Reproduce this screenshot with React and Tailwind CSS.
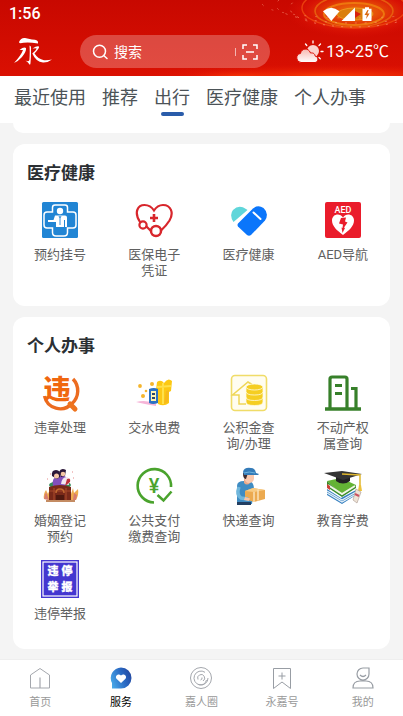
import clsx from 'clsx';

const tabs = ['最近使用', '推荐', '出行', '医疗健康', '个人办事'];

function HeaderArt() {
    return (
        <svg className="absolute inset-0 w-full h-full" viewBox="0 0 403 76" preserveAspectRatio="xMaxYMin slice" aria-hidden="true">
            <defs>
                <radialGradient id="burst" cx="0.5" cy="0.5" r="0.5">
                    <stop offset="0" stopColor="#f08a10" />
                    <stop offset="0.35" stopColor="#e85008" />
                    <stop offset="0.7" stopColor="#de1806" stopOpacity="0.8" />
                    <stop offset="1" stopColor="#d80c04" stopOpacity="0" />
                </radialGradient>
                <radialGradient id="glow" cx="0.5" cy="0.5" r="0.5">
                    <stop offset="0" stopColor="#ff4a08" stopOpacity="0.8" />
                    <stop offset="1" stopColor="#e81404" stopOpacity="0" />
                </radialGradient>
            </defs>
            <ellipse cx="330" cy="76" rx="190" ry="12" fill="url(#glow)" />
            <ellipse cx="240" cy="78" rx="60" ry="9" fill="url(#glow)" />
            <ellipse cx="356" cy="12" rx="70" ry="26" fill="url(#burst)" opacity="0.9" />
            <g fill="none">
                <ellipse cx="355" cy="14" rx="18" ry="6" fill="#d9820c" stroke="#f0a020" opacity="0.9" />
                <ellipse cx="354" cy="14" rx="30" ry="11" stroke="#ee7c10" strokeWidth="2" opacity="0.9" />
                <ellipse cx="354" cy="11" rx="39" ry="16" stroke="#e86a10" strokeWidth="1.600" opacity="0.8" />
                <ellipse cx="354" cy="8" rx="52" ry="20" stroke="#f04a10" strokeWidth="1.400" opacity="0.8" />
                <ellipse cx="354" cy="8" rx="64" ry="19" stroke="#ffa080" strokeWidth="1" strokeDasharray="2 7" opacity="0.6" />
                <ellipse cx="354" cy="5" rx="78" ry="18" stroke="#ffb090" strokeWidth="1" strokeDasharray="2 8" opacity="0.5" />
                <ellipse cx="354" cy="3" rx="92" ry="15" stroke="#ffb090" strokeWidth="1" strokeDasharray="2 9" opacity="0.4" />
            </g>
            <path d="m355 11 6 3-6 4z" fill="#d8200c" />
        </svg>
    );
}

function StatusIcons() {
    return (
        <svg className="w-[50px] h-4" viewBox="0 0 50 16" fill="#fff" aria-hidden="true">
            <path d="M0 5.300Q8 -1.800 16.500 5.300L8.300 15Z" />
            <path d="M32 1.500V15H18.500Z" />
            <path d="M42 1.200h4V2.700h2.500V15h-9V2.700H42Z" />
            <path d="m44.500 4-3 5h2.300l-.7 4 3.500-5.400h-2.300l1.300-3.600Z" fill="#d96a10" />
        </svg>
    );
}

function BrandMark() {
    return (
        <svg className="w-[38px] h-[29px]" viewBox="0 0 38 29" fill="#fff" aria-hidden="true">
            <path d="M5 5Q7 .5 11 1L18 2.500Q25 2.500 24 6.500Q14 4.700 9.500 5.800Q5 7 5 5Z" />
            <path d="M5.500 13Q10 9.500 12 11Q12.500 14.500 8 20Q4 24.500 0 26Q7 18.500 9 13Z" />
            <path d="M15.500 8.500Q17.500 9 17 12Q17.200 19 16.500 26Q16.300 29.500 14 25.500L11.500 23.500Q15 25 15.400 23Q16 15 15.500 8.500Z" />
            <path d="M18.500 11.500Q23 8.500 25 9.500Q26 10.500 20.500 16.500Q24 22 30 23.200Q34 23.500 38 22.500Q34 25.700 29 25.500Q22 25 18.300 16.500Q22.500 13 22.500 11.300Z" />
        </svg>
    );
}

function SearchIcon() {
    return (
        <svg className="w-4 h-4 shrink-0" viewBox="0 0 16 16" fill="none" stroke="#fff" strokeWidth="1.500" strokeLinecap="round" aria-hidden="true">
            <circle cx="7.500" cy="7.200" r="6" />
            <path d="m12 11.700 3 2.800" />
        </svg>
    );
}

function ScanIcon() {
    return (
        <svg className="w-4 h-4" viewBox="0 0 16 16" fill="none" stroke="#fff" strokeWidth="1.500" aria-hidden="true">
            <path d="M5 1H1v4M11 1h4v4M5 15H1v-4M11 15h4v-4M4 8h8" />
        </svg>
    );
}

function WeatherIcon() {
    return (
        <svg className="w-7 h-6" viewBox="0 0 28 24" aria-hidden="true">
            <defs>
                <linearGradient id="cloud" x1="0" y1="0" x2="0" y2="1">
                    <stop offset="0" stopColor="#f8b8b0" />
                    <stop offset="1" stopColor="#fff" />
                </linearGradient>
            </defs>
            <circle cx="17" cy="11" r="6" fill="#fbd2cd" />
            <path d="M17 1v2M9.500 4l1.300 1.500M24.500 4l-1.500 1.500M25 11.500h2M23 17.500l1.300 1.200" stroke="#fff" strokeWidth="1.300" strokeLinecap="round" />
            <path d="M5 22.500a4.600 4.600 0 0 1-.5-9.100C5 8.500 12.500 7 14.500 13c3.500-.5 4.500 1.500 4.500 3 4 .5 3.500 6.500 0 6.500Z" fill="url(#cloud)" stroke="#da0c04" strokeWidth="1" />
        </svg>
    );
}

function ClinicIcon() {
    return (
        <svg viewBox="0 0 38 38">
            <rect x="1" y="1" width="36" height="36" rx="1.500" fill="#2185d4" />
            <path d="M14 4h10q2.500 0 2.500 2.500V11H32q3 0 3 3v10q0 3-3 3h-5.500v4.500Q26.500 35 23 35h-8q-3.500 0-3.500-3.500V27H6q-3 0-3-3V14q0-3 3-3h5.500V6.500Q11.500 4 14 4Z" fill="none" stroke="#fff" strokeWidth="1.500" />
            <circle cx="19" cy="10" r="3.200" fill="#fff" />
            <path d="M14 14.500h10q2 0 2 2V26h-2v-7h-1v7h-8v-5H7v-2h5.500Z" fill="#fff" />
            <path d="m18 15 1 2 1-2M19 17v7" stroke="#2185d4" fill="none" strokeWidth=".9" />
        </svg>
    );
}

function HeartScopeIcon() {
    return (
        <svg viewBox="0 0 38 38" fill="none" stroke="#d8262c" strokeWidth="2.200" strokeLinecap="round">
            <path d="M5 21C-1.500 11 3 4 9.500 4q6 0 9.500 5.500Q22.500 4 28 4c8 0 11 8 6.500 15.500Q31 25 26.500 29" />
            <circle cx="8" cy="24" r="3.600" />
            <path d="M11.500 25.500Q14 28 16 30" />
            <circle cx="21" cy="30" r="5" strokeWidth="2.500" />
            <path d="M19 13v8M15 17h8" strokeWidth="2.600" strokeLinecap="butt" />
        </svg>
    );
}

function PillHeartIcon() {
    return (
        <svg viewBox="0 0 38 38">
            <path d="M3.500 21Q-1 14 3 9q6-6 13-1l1.500 1Z" fill="#5fd6da" />
            <path d="m8 22.500 15-15q5-4 10.500-.5 6 5.500 1.500 12.500L21 34q-2 1.500-4 0L8 25.500q-1-1.500 0-3Z" fill="#0b76fb" />
            <path d="m23.500 11.500 7 6.500" stroke="#fff" strokeWidth="2" strokeLinecap="round" />
        </svg>
    );
}

function AedIcon() {
    return (
        <svg viewBox="0 0 38 38">
            <rect x="1" y="1" width="36" height="36" rx="2" fill="#ea1c2b" />
            <text x="19" y="11.500" textAnchor="middle" fontSize="9" fontWeight="500" fill="#fff" fontFamily="Roboto, sans-serif">AED</text>
            <path d="M19 34C13 29.500 8 25 8 19.500c0-6.500 8-8 11-3 3-5 11-3.500 11 3C30 25 25 29.500 19 34Z" fill="#fff" />
            <path d="m17 17 5-.5-1 4 2.500 1-3.500 5 1 .5-2.500 5-1-5.500 1 .5.500-3.500-4-1Z" fill="#ea1c2b" />
        </svg>
    );
}

function ViolationIcon() {
    return (
        <svg viewBox="0 0 38 38" className="overflow-visible">
            <path d="M32 5a17 17 0 0 1-1 24.500A16 16 0 0 1 3.500 22" fill="none" stroke="#ec6c20" strokeWidth="3.400" />
            <path d="m29 30 5 5" stroke="#ee741f" strokeWidth="5" strokeLinecap="round" />
            <text x="16" y="25" textAnchor="middle" fontSize="27" fontWeight="900" fill="#f0670f" fontFamily="'Noto Sans CJK SC', sans-serif">违</text>
        </svg>
    );
}

function UtilityIcon() {
    return (
        <svg viewBox="0 0 38 38">
            <path d="M1 28q10-3 20 2v2Q9 30 1 28Z" fill="#f6b5d8" />
            <path d="M22 8q4-3 7 1 4-6 8-2l-1 10-2 1v11q-5 4-11 1V17l-2-1Z" fill="#fcc814" />
            <path d="M28 9v21M22 13l14-1" stroke="#ffe04a" strokeWidth="2" />
            <path d="m34 16-1 12-4 2 2-13Z" fill="#f7b91a" />
            <path d="M14 15q5-2 9 0v14q-5 2-9 0Z" fill="#2b72c4" />
            <path d="M16 17h5v10h-5Z" fill="#fff3b0" />
            <path d="M17 19h3v2h-3zM17 23h3v2h-3z" fill="#28446e" />
            <g fill="#f5b52c">
                <circle cx="5" cy="12" r="1.900" />
                <circle cx="17" cy="10" r="2" />
                <circle cx="8" cy="22" r="2" />
                <circle cx="11" cy="17" r="1.300" />
            </g>
        </svg>
    );
}

function FundIcon() {
    return (
        <svg viewBox="0 0 38 38">
            <rect x="1.500" y="1.500" width="35" height="35" rx="3.500" fill="#fffdf0" stroke="#f0dc68" strokeWidth="1.600" />
            <path d="M16 30H9V21H2.500L18 8l4 2.500" fill="none" stroke="#efd658" strokeWidth="1.500" />
            <g fill="#f5ce22" stroke="#fffbe2" strokeWidth=".8">
                <path d="M16 24v4q0 3.500 8.500 3.500T33 28v-4Z" />
                <path d="M16 18v5q0 3.500 8.500 3.500T33 23v-5Z" />
                <path d="M16 13v4.500q0 3.500 8.500 3.500t8.500-3.500V13Z" />
                <ellipse cx="24.500" cy="13" rx="8.500" ry="3" />
            </g>
        </svg>
    );
}

function EstateIcon() {
    return (
        <svg viewBox="0 0 38 38" fill="none" stroke="#37802a" strokeWidth="3.200">
            <path d="M1 35h36" strokeWidth="3.600" />
            <path d="M6 35V5q0-2 2-2h13q2 0 2 2v30M27 14.500h5V35" />
            <path d="M11 11.500h7M11 19.500h7" />
        </svg>
    );
}

function MarriageIcon() {
    return (
        <svg viewBox="0 0 38 38">
            <path d="M3 32q-1-5 2-9l2 4 2-5 2 11ZM28 33l4-12 1 5 4-4q1 6-2 11Z" fill="#efac50" />
            <path d="M3 32q1-5 2-7l3 8ZM32 33l1-7 3 2-1 5Z" fill="#d67b70" />
            <ellipse cx="19" cy="18" rx="11" ry="4" fill="#358d59" />
            <path d="M12 19q-2-9 6-10 6-2 10 5l-4 5Z" fill="#8250bb" />
            <path d="M20 17q1-8 7-7l1 8Z" fill="#f3e7ef" />
            <path d="M11 9q-1-6 4-6 5 0 4 7l-3 2Z" fill="#2b1738" />
            <circle cx="15.500" cy="9" r="2.500" fill="#f5c6a4" />
            <path d="M18 5q2-5 7-2l-1 6-4 1Z" fill="#2b1738" />
            <circle cx="22" cy="7" r="2.300" fill="#f5c6a4" />
            <path d="M26 12q4-2 3 3l-5 4Z" fill="#bf313b" />
            <path d="M8 20q11-4 22 0v13H8Z" fill="#792919" />
            <path d="M8 24h22M13 21v12M25 21v12" stroke="#a5482a" strokeWidth="1.200" />
            <path d="M15 26q0-4 4-4t4 4" fill="none" stroke="#c26a32" strokeWidth="1.500" />
            <path d="M15 28h8v5h-8Z" fill="#50190f" />
            <path d="M5 34h29" stroke="#b0662f" strokeWidth="1.500" />
            <path d="M9 7h1M31 5h1M6 12h1M32 11h1" stroke="#e68989" />
        </svg>
    );
}

function PaymentIcon() {
    return (
        <svg viewBox="0 0 38 38" fill="none" stroke="#4aa32d" strokeWidth="2.600">
            <path d="M19 35.500A16.700 16.700 0 1 1 36 20" />
            <path d="m22.500 28 6 5.500 8-9" />
            <text x="19" y="26" textAnchor="middle" fontSize="20" fontWeight="500" fill="#4aa32d" stroke="none" fontFamily="Roboto, sans-serif">¥</text>
        </svg>
    );
}

function CourierIcon() {
    return (
        <svg viewBox="0 0 38 38">
            <path d="M7 19q0-5 7-5h6q4 2 4 8l-2 15H7Z" fill="#3f8cc3" />
            <path d="M7 35h14v3H7Z" fill="#233f62" />
            <path d="M14 12h6v4q-3 3-6 0Z" fill="#eaa98a" />
            <path d="M14 6h10v6q-1 4-5 4t-5-6Z" fill="#fac8ad" />
            <path d="M13 6h5l-2 6q-3 0-3-6Z" fill="#3f2c30" />
            <path d="M13 5q1-5 8-4 4 0 5 5l3 1-1 1H14Z" fill="#347bb8" />
            <path d="M14 6q5-2 11 0" stroke="#6eb3dd" fill="none" />
            <path d="m15 24 8-3 12 2v9l-11 3-9-3Z" fill="#ecaa50" />
            <path d="m15 24 8-3 12 2-11 2Z" fill="#f8cb83" />
            <path d="M24 25v10M28 22.500v11" stroke="#fae1b6" strokeWidth="1.500" />
            <path d="M9 20q-3 8 2 11l7 1" fill="none" stroke="#70b6db" strokeWidth="3.500" />
            <path d="m15 30 5 1.500-1 2.500-5-1Z" fill="#f9c4a5" />
        </svg>
    );
}

function GraduationIcon() {
    return (
        <svg viewBox="0 0 38 38">
            <path d="m3 22 14 9 15-8v5l-14 9-15-9Z" fill="#347fc0" />
            <path d="m3 24 15 9 14-8M3 26l15 9 14-8" stroke="#e9f2f8" strokeWidth="1.200" fill="none" />
            <path d="m3 14 14-3 15 7-14 10Z" fill="#64b335" />
            <path d="M3 14v6l15 10 14-9v-3L18 28Z" fill="#388c28" />
            <path d="m4 18 14 9 13-8" stroke="#f2f5e8" strokeWidth="2" fill="none" />
            <path d="M3 17v4l3 2v-4Z" fill="#cb4036" />
            <path d="M12 8v6q7 5 14 0V8Z" fill="#222" />
            <path d="m0 6 18-2 20 3-19 6Z" fill="#343434" />
            <path d="m18 7 18 1v12" fill="none" stroke="#dfb62e" strokeWidth="1.500" />
            <path d="m35 18-1 6h4l-1-6Z" fill="#edc13b" />
            <path d="m32 22 5 3-4 11-4-3Z" fill="#eee2d5" stroke="#b3a39a" strokeWidth=".7" />
            <path d="m31 27 4 2" stroke="#cb5060" strokeWidth="2" />
        </svg>
    );
}

function ParkingIcon() {
    return (
        <svg viewBox="0 0 38 38">
            <rect width="38" height="38" fill="#4437d0" />
            <rect x="2" y="2" width="34" height="34" fill="none" stroke="#fff" strokeWidth="1.200" />
            <g fontSize="11" fontWeight="900" fill="#fff" stroke="#fff" strokeWidth=".3" textAnchor="middle" fontFamily="'Noto Sans CJK SC', sans-serif">
                <text x="12" y="15">违</text>
                <text x="26" y="15">停</text>
                <text x="12" y="31">举</text>
                <text x="26" y="31">报</text>
            </g>
        </svg>
    );
}

const sections = [
    {
        title: '医疗健康',
        items: [
            { label: '预约挂号', icon: ClinicIcon },
            { label: '医保电子凭证', icon: HeartScopeIcon },
            { label: '医疗健康', icon: PillHeartIcon },
            { label: 'AED导航', icon: AedIcon },
        ],
    },
    {
        title: '个人办事',
        items: [
            { label: '违章处理', icon: ViolationIcon },
            { label: '交水电费', icon: UtilityIcon },
            { label: '公积金查询/办理', icon: FundIcon },
            { label: '不动产权属查询', icon: EstateIcon },
            { label: '婚姻登记预约', icon: MarriageIcon },
            { label: '公共支付缴费查询', icon: PaymentIcon },
            { label: '快递查询', icon: CourierIcon },
            { label: '教育学费', icon: GraduationIcon },
            { label: '违停举报', icon: ParkingIcon },
        ],
    },
];

function HomeIcon() {
    return (
        <svg viewBox="0 0 22 22" fill="none" stroke="#a4a7ad">
            <path d="M1.500 8 11 1.500 20.500 8v13h-19Z" />
            <path d="M11 10.500V21" strokeWidth="1.200" />
        </svg>
    );
}

function ServiceIcon() {
    return (
        <svg viewBox="0 0 22 22">
            <defs>
                <linearGradient id="service" x1="0" y1="0.700" x2="1" y2="0.300">
                    <stop offset="0" stopColor="#48a8e8" />
                    <stop offset="0.600" stopColor="#2968c2" />
                    <stop offset="1" stopColor="#2448a0" />
                </linearGradient>
            </defs>
            <path d="M11 .5a10.500 10.500 0 1 1 0 21H2v-5.500A10.500 10.500 0 0 1 11 .5Z" fill="url(#service)" />
            <path d="m11 16-4.500-4.300c-2-2.700 1.800-6 4.500-3.200 2.700-2.800 6.500.5 4.500 3.200Z" fill="#fff" />
        </svg>
    );
}

function CircleIcon() {
    return (
        <svg viewBox="0 0 22 22" fill="none" stroke="#a4a7ad">
            <circle cx="11" cy="11" r="10.500" />
            <path d="M18 11a7 7 0 1 1-3-5.700M8 17.500q7 1.500 8.500-4.500" />
            <path d="M8 12.500a3.500 3.500 0 1 1 5 1.500M10.500 13q2-.5 1.500-2.500" />
        </svg>
    );
}

function BookmarkIcon() {
    return (
        <svg viewBox="0 0 22 22" fill="none" stroke="#989da4">
            <path d="M2.500 1.500h17v20L11 15l-8.500 6.500ZM11 5.500v7M7.500 9h7" />
        </svg>
    );
}

function MineIcon() {
    return (
        <svg viewBox="0 0 22 22" fill="none" stroke="#989da4" strokeWidth="1.200">
            <path d="M17 1h-6a6 6 0 1 0 6 6ZM8 8q3 3 6 0M1 21q0-7 7-7h6q7 0 7 7Z" />
        </svg>
    );
}

const navItems = [
    { label: '首页', icon: HomeIcon },
    { label: '服务', icon: ServiceIcon, active: true },
    { label: '嘉人圈', icon: CircleIcon },
    { label: '永嘉号', icon: BookmarkIcon },
    { label: '我的', icon: MineIcon },
];

export default function App() {
    return (
        <div className="min-h-screen flex flex-col bg-[#f4f4f4] font-[Roboto,'Noto_Sans_CJK_SC',sans-serif]">
            {/* Header */}
            <header className="relative overflow-hidden bg-gradient-to-b from-[#c80800] to-[#da1002] text-white">
                <HeaderArt />
                <div className="relative flex items-center justify-between pl-[9px] pr-[30px] h-7">
                    <span className="text-base leading-5 font-medium">1:56</span>
                    <StatusIcons />
                </div>
                <div className="relative flex items-center px-[14px] pt-[7px] pb-2">
                    <a href="#home" aria-label="永嘉" className="shrink-0"><BrandMark /></a>
                    <div className="flex flex-1 min-w-0 items-center h-[33px] ml-7 px-3 rounded-full bg-white/25">
                        <SearchIcon />
                        <input
                            type="search"
                            aria-label="搜索"
                            placeholder="搜索"
                            className="flex-1 w-0 min-w-0 ml-1.5 text-sm bg-transparent outline-none placeholder:text-white"
                        />
                        <span className="w-px h-2 mr-1.5 bg-white/60" />
                        <button type="button" aria-label="扫一扫" className="shrink-0"><ScanIcon /></button>
                    </div>
                    <div className="flex items-center shrink-0 ml-[26px]">
                        <WeatherIcon />
                        <span className="ml-0.5 text-base leading-6 whitespace-nowrap">13~25℃</span>
                    </div>
                </div>
            </header>

            {/* Category tabs */}
            <nav className="flex gap-4 px-[14px] pt-2.5 pb-[7px] bg-white overflow-hidden">
                {tabs.map((tab) => (
                    <button key={tab} type="button" className="flex flex-col items-center shrink-0 text-lg leading-6 text-[#4c5357]">
                        {tab}
                        <span className={clsx('w-[23px] h-1 mt-0.5 rounded-sm', tab === '出行' && 'bg-[#2a5caa]')} />
                    </button>
                ))}
            </nav>

            {/* Service groups */}
            <main className="flex-1 px-[13px] pb-[10px]">
                <div className="h-2.5 rounded-b-xl bg-white" />
                {sections.map((section) => (
                    <section key={section.title} className="mt-[11px] pt-[18px] pb-3 rounded-xl bg-white">
                        <h2 className="px-[14px] text-[17px] leading-[22px] font-bold text-[#2b2f33]">{section.title}</h2>
                        <div className="grid grid-cols-4 mt-[17px]">
                            {section.items.map(({ label, icon: Icon }) => (
                                <a key={label} href="#service" className="flex flex-col items-center pb-[15px]">
                                    <span className="w-[38px] h-[38px]"><Icon /></span>
                                    <span className="w-15 mt-2 text-[13px] leading-4 text-center text-[#606060]">{label}</span>
                                </a>
                            ))}
                        </div>
                    </section>
                ))}
            </main>

            {/* Bottom navigation */}
            <nav className="grid grid-cols-5 pt-[7px] pb-[5px] border-t border-[#eeeeee] bg-white">
                {navItems.map(({ label, icon: Icon, active }) => (
                    <a key={label} href="#tab" className="flex flex-col items-center">
                        <span className="w-[22px] h-[22px]"><Icon /></span>
                        <span className={clsx('mt-1.5 text-[11px] leading-4', active ? 'text-black' : 'text-[#999999]')}>{label}</span>
                    </a>
                ))}
            </nav>
        </div>
    );
}
